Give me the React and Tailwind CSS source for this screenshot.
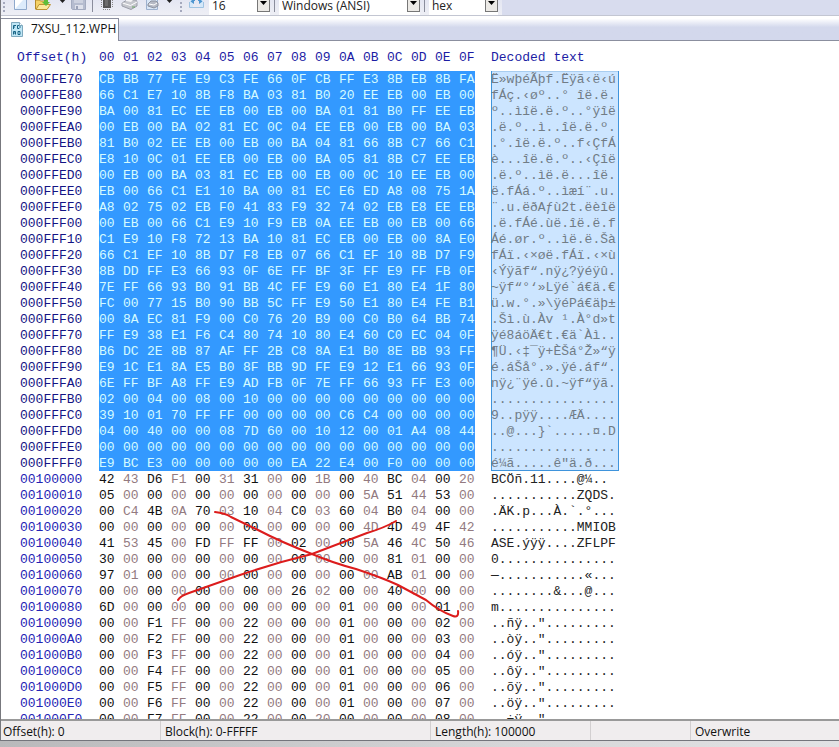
import React from "react";
import clsx from "clsx";

const HEX_COLUMNS = Array.from({ length: 16 }, (_, i) => i.toString(16).toUpperCase().padStart(2, "0"));

const START_OFFSET = 0xffe70;
const SELECTION_END = 0x100000;

const DUMP = [
    "CB BB 77 FE E9 C3 FE 66 0F CB FF E3 8B EB 8B FA",
    "66 C1 E7 10 8B F8 BA 03 81 B0 20 EE EB 00 EB 00",
    "BA 00 81 EC EE EB 00 EB 00 BA 01 81 B0 FF EE EB",
    "00 EB 00 BA 02 81 EC 0C 04 EE EB 00 EB 00 BA 03",
    "81 B0 02 EE EB 00 EB 00 BA 04 81 66 8B C7 66 C1",
    "E8 10 0C 01 EE EB 00 EB 00 BA 05 81 8B C7 EE EB",
    "00 EB 00 BA 03 81 EC EB 00 EB 00 0C 10 EE EB 00",
    "EB 00 66 C1 E1 10 BA 00 81 EC E6 ED A8 08 75 1A",
    "A8 02 75 02 EB F0 41 83 F9 32 74 02 EB E8 EE EB",
    "00 EB 00 66 C1 E9 10 F9 EB 0A EE EB 00 EB 00 66",
    "C1 E9 10 F8 72 13 BA 10 81 EC EB 00 EB 00 8A E0",
    "66 C1 EF 10 8B D7 F8 EB 07 66 C1 EF 10 8B D7 F9",
    "8B DD FF E3 66 93 0F 6E FF BF 3F FF E9 FF FB 0F",
    "7E FF 66 93 B0 91 BB 4C FF E9 60 E1 80 E4 1F 80",
    "FC 00 77 15 B0 90 BB 5C FF E9 50 E1 80 E4 FE B1",
    "00 8A EC 81 F9 00 C0 76 20 B9 00 C0 B0 64 BB 74",
    "FF E9 38 E1 F6 C4 80 74 10 80 E4 60 C0 EC 04 0F",
    "B6 DC 2E 8B 87 AF FF 2B C8 8A E1 B0 8E BB 93 FF",
    "E9 1C E1 8A E5 B0 8F BB 9D FF E9 12 E1 66 93 0F",
    "6E FF BF A8 FF E9 AD FB 0F 7E FF 66 93 FF E3 00",
    "02 00 04 00 08 00 10 00 00 00 00 00 00 00 00 00",
    "39 10 01 70 FF FF 00 00 00 00 C6 C4 00 00 00 00",
    "04 00 40 00 00 08 7D 60 00 10 12 00 01 A4 08 44",
    "00 00 00 00 00 00 00 00 00 00 00 00 00 00 00 00",
    "E9 BC E3 00 00 00 00 00 EA 22 E4 00 F0 00 00 00",
    "42 43 D6 F1 00 31 31 00 00 1B 00 40 BC 04 00 20",
    "05 00 00 00 00 00 00 00 00 00 00 5A 51 44 53 00",
    "00 C4 4B 0A 70 03 10 04 C0 03 60 04 B0 04 00 00",
    "00 00 00 00 00 00 00 00 00 00 00 4D 4D 49 4F 42",
    "41 53 45 00 FD FF FF 00 02 00 00 5A 46 4C 50 46",
    "30 00 00 00 00 00 00 00 00 00 00 00 81 01 00 00",
    "97 01 00 00 00 00 00 00 00 00 00 00 AB 01 00 00",
    "00 00 00 00 00 00 00 00 26 02 00 00 40 00 00 00",
    "6D 00 00 00 00 00 00 00 00 00 01 00 00 00 01 00",
    "00 00 F1 FF 00 00 22 00 00 00 01 00 00 00 02 00",
    "00 00 F2 FF 00 00 22 00 00 00 01 00 00 00 03 00",
    "00 00 F3 FF 00 00 22 00 00 00 01 00 00 00 04 00",
    "00 00 F4 FF 00 00 22 00 00 00 01 00 00 00 05 00",
    "00 00 F5 FF 00 00 22 00 00 00 01 00 00 00 06 00",
    "00 00 F6 FF 00 00 22 00 00 00 01 00 00 00 07 00",
    "00 00 F7 FF 00 00 22 00 00 20 00 00 00 00 08 00",
];

const ansi = new TextDecoder("windows-1252");

// Unprintable bytes show up as dots
const decodeRow = (bytes) =>
    ansi
        .decode(Uint8Array.from(bytes, (b) => parseInt(b, 16)))
        .replace(/[\u0000-\u001f\u007f-\u009f\u00ad]/g, ".");

const rows = DUMP.map((line, index) => {
    const offset = START_OFFSET + index * 16;
    const bytes = line.split(" ");
    return {
        offset: offset.toString(16).toUpperCase().padStart(8, "0"),
        bytes,
        text: decodeRow(bytes),
        selected: offset < SELECTION_END,
        lastSelected: offset + 16 === SELECTION_END,
    };
});

const byteColor = (selected, column) => {
    if (selected) return "bg-[#3399ff] text-[#d4fbff]";
    return column % 2 ? "text-[#937a80]" : "text-[#111]";
};

const Caret = () => (
    <svg width="10" height="6" viewBox="0 0 10 6" className="shrink-0 fill-[#222]" aria-hidden="true">
        <path d="M0 0h9L4.500 5z" />
    </svg>
);

const Grip = () => (
    <svg width="4" height="14" viewBox="0 0 4 14" className="shrink-0 fill-[#a5a9bd]" aria-hidden="true">
        <path d="M1 0h2v2H1zM1 4h2v2H1zM1 8h2v2H1zM1 12h2v2H1z" />
    </svg>
);

const Separator = () => <div className="h-3 w-px shrink-0 bg-[#8a8d9c]" />;

const ToolButton = ({ label, className, children }) => (
    <button type="button" aria-label={label} className={clsx("flex h-3 shrink-0 items-end", className)}>
        {children}
    </button>
);

const ToolSelect = ({ label, value, className }) => (
    <div className={clsx("relative h-5 shrink-0", className)}>
        <select
            aria-label={label}
            defaultValue={value}
            className="h-5 w-full appearance-none bg-white pb-2 pl-[3px] text-xs leading-3 text-[#222] outline-none"
        >
            <option>{value}</option>
        </select>
        <span className="pointer-events-none absolute inset-y-0 right-0 flex w-[13px] items-end justify-center border border-[#777] bg-[#eceae6] pb-[6px]">
            <svg width="7" height="4" viewBox="0 0 7 4" aria-hidden="true">
                <path d="M0 0h7L3.500 4z" />
            </svg>
        </span>
    </div>
);

const Toolbar = () => (
    <div className="flex h-4 shrink-0 items-end overflow-hidden border-b border-[#c3c6d2] bg-[#d8dcee]">
        <div className="flex items-end bg-linear-to-b from-[#dfe2f1] to-[#eeeff5] pb-[3px] pl-px">
            <Grip />
            <ToolButton label="New" className="ml-2 w-[14px]">
                <svg width="14" height="12" viewBox="0 0 14 12">
                    <path d="M.5 -3h12v12.500H.5z" fill="#dcebfb" stroke="#8fa9cc" />
                    <path d="M1 0h8L1 9z" fill="#fff" />
                </svg>
            </ToolButton>
            <ToolButton label="Open" className="ml-[6px] w-[18px]">
                <svg width="18" height="12" viewBox="0 0 18 12">
                    <path d="M1.500 9V0h4l1 1h6v8z" fill="#f5d267" stroke="#b48a2c" />
                    <path d="M2 9.500 5 4.500h11.500L13 9.500z" fill="#fce99c" stroke="#bd9334" />
                    <path d="M10 0h4v2h2l-4 4-4-4h2z" fill="#5fbd3b" />
                </svg>
            </ToolButton>
            <ToolButton label="Open recent" className="ml-[6px] w-[10px] pb-2">
                <Caret />
            </ToolButton>
            <ToolButton label="Save" className="ml-[3px] w-4">
                <svg width="16" height="12" viewBox="0 0 16 12">
                    <path d="M.5 -4h14v13.500h-13l-1-1z" fill="#b5bccf" stroke="#a3abc0" />
                    <path d="M3 -3h9v6H3z" fill="#cdd2e0" />
                    <path d="M4 5h8v4H4z" fill="#dfe2ec" />
                    <path d="M5 6h2v3H5z" fill="#9aa2b8" />
                </svg>
            </ToolButton>
            <div className="ml-[5px]">
                <Separator />
            </div>
            <ToolButton label="Open RAM" className="ml-2 w-[13px]">
                <svg width="13" height="12" viewBox="0 0 13 12">
                    <path d="M2 -2h8v10H2z" fill="#555" />
                    <path d="M0 0h1v1H0zM0 2h1v1H0zM0 4h1v1H0zM0 6h1v1H0zM11 0h1v1h-1zM11 2h1v1h-1zM11 4h1v1h-1zM11 6h1v1h-1zM2 9h1v1H2zM4 9h1v1H4zM6 9h1v1H6zM8 9h1v1H8z" fill="#888" />
                    <path d="M4 0h3v6H4z" fill="#6d6d6d" />
                </svg>
            </ToolButton>
            <ToolButton label="Open disk" className="ml-[7px] w-[17px]">
                <svg width="17" height="12" viewBox="0 0 17 12">
                    <path d="M1 3 6 0h9l1 2v4l-6 3.500L1 6z" fill="#c5c7cd" stroke="#9a9da8" />
                    <path d="m1.500 3 8 2.500L16 2" fill="none" stroke="#fff" />
                    <path d="M5 0h7l-2 2-5-1z" fill="#f4f4f6" />
                    <path d="M11 7h3" stroke="#68a560" />
                </svg>
            </ToolButton>
            <ToolButton label="Open disk image" className="ml-2 w-[14px]">
                <svg width="14" height="12" viewBox="0 0 14 12">
                    <path d="M.5 -2h11v11.500H.5z" fill="#d9e6f6" stroke="#9db1ce" />
                    <path d="m2 4 3-3h5l2 2v3L8 8 2 6z" fill="#b5b9c4" stroke="#8d93a0" />
                    <path d="m3 4 5 1 3-2" fill="none" stroke="#fff" />
                </svg>
            </ToolButton>
            <ToolButton label="Open disk recent" className="ml-[5px] w-[10px] pb-2">
                <Caret />
            </ToolButton>
            <div className="ml-1">
                <Grip />
            </div>
            <ToolButton label="Bytes per row" className="ml-[6px] w-4">
                <svg width="16" height="12" viewBox="0 0 16 12">
                    <path d="M1 0h3v7H1zM11 0h3v7h-3z" fill="#d4e8fa" />
                    <path d="M.5 2v5.500h14V2" fill="none" stroke="#9fc3e2" />
                    <path d="M6 0v1h-1v3L1.500 1.500 4 -1zM9 0v1h1v3l3.500-2.500L11 -1z" fill="#4f96d0" />
                </svg>
            </ToolButton>
            <ToolSelect label="Bytes per row count" value="16" className="ml-1 w-[61px]" />
            <div className="ml-1">
                <Separator />
            </div>
            <ToolSelect label="Character set" value="Windows (ANSI)" className="ml-1 w-[141px]" />
            <div className="ml-1">
                <Separator />
            </div>
            <ToolSelect label="Offset base" value="hex" className="mx-1 w-[69px]" />
        </div>
    </div>
);

const TabStrip = () => (
    <div className="flex h-[25px] shrink-0 items-end bg-linear-to-b from-white from-10% to-[#d3d8ec] to-45%">
        <button
            type="button"
            className="flex h-[23px] w-[118px] items-center gap-2 border-t border-r border-[#8b8f9f] bg-white pb-[2px] pl-[10px] text-xs text-[#111]"
        >
            <svg width="12" height="15" viewBox="0 0 12 15" className="shrink-0" aria-hidden="true">
                <path d="M.5.5h8l3 3v11H.5z" fill="#bfe6f5" stroke="#7fa9be" />
                <path d="M8.500.5v3h3" fill="#fff" stroke="#7fa9be" />
                <path d="M2.500 7V3.500H5M2.500 5H4M6.500 3.500V6.500H8l1-1V4.500L8 3.500zM2.500 12.500v-3h2v3M2.500 11h2M7 9.500h2v3H7z" fill="none" stroke="#176486" />
            </svg>
            7XSU_112.WPH
        </button>
        <div className="h-full flex-1 border-b border-[#8b8f9f]" />
    </div>
);

const HexTable = () => (
    <table className="w-[618px] table-fixed border-collapse whitespace-pre text-left font-['Liberation_Mono','Courier_New',monospace] text-[13px] leading-[14px]">
        <colgroup>
            <col className="w-[98px]" />
            {HEX_COLUMNS.map((column) => (
                <col key={column} className={column === "0F" ? "w-4" : "w-6"} />
            ))}
            <col className="w-4" />
            <col className="w-32" />
        </colgroup>
        <thead>
            <tr className="h-[30px] text-[#1c1ca4]">
                <th scope="col" className="p-0 pt-1 pl-4 font-normal">Offset(h)</th>
                {HEX_COLUMNS.map((column) => (
                    <th key={column} scope="col" className="p-0 pt-1 font-normal">{column}</th>
                ))}
                <td className="p-0" />
                <th scope="col" className="p-0 pt-1 font-normal">Decoded text</th>
            </tr>
        </thead>
        <tbody>
            {rows.map((row, index) => (
                <tr key={row.offset} className="h-4">
                    <th
                        scope="row"
                        className={clsx("p-0 pt-[2px] pl-[19px] font-normal", row.selected ? "text-[#141484]" : "text-[#2424b4]")}
                    >
                        {row.offset}
                    </th>
                    {row.bytes.map((byte, column) => (
                        <td key={column} className={clsx("p-0 pt-[2px]", byteColor(row.selected, column))}>{byte}</td>
                    ))}
                    <td className="p-0" />
                    <td
                        className={clsx(
                            "p-0 pt-[2px]",
                            row.selected ? "bg-[#cce5ff] text-[#717c86]" : "text-[#222]",
                            row.selected && !row.lastSelected && index > 0 && "shadow-[inset_1px_0_#3f94dc,inset_-1px_0_#3f94dc]",
                            index === 0 && "shadow-[inset_1px_0_#3f94dc,inset_-1px_0_#3f94dc,inset_0_1px_#a8cdf0]",
                            row.lastSelected && "shadow-[inset_1px_0_#3f94dc,inset_-1px_0_#3f94dc,inset_0_-1px_#3f94dc]"
                        )}
                    >
                        {row.text}
                    </td>
                </tr>
            ))}
        </tbody>
    </table>
);

// Hand-drawn red cross over the dump
const CrossMark = () => (
    <svg
        width="290"
        height="110"
        viewBox="0 0 290 110"
        fill="none"
        stroke="#dc1c1c"
        strokeWidth="2"
        strokeLinecap="round"
        strokeLinejoin="round"
        className="pointer-events-none absolute left-[174px] top-[469px]"
        aria-hidden="true"
    >
        <path d="M40 2Q50 3 56 7L83 20Q106 32 137 44Q158 53 181 59Q208 68 223 75L251 90Q264 101 278 106Q284 108 283 101" />
        <path d="M221 11Q209 18 192 23L137 44Q100 53 65 65L14 83Q5 86 3 90" />
    </svg>
);

const STATUS = [
    { text: "Offset(h): 0", className: "w-[159px] pl-[2px]" },
    { text: "Block(h): 0-FFFFF", className: "w-[270px] border-l pl-1" },
    { text: "Length(h): 100000", className: "w-[160px] border-l pl-1" },
    { text: "", className: "w-[100px] border-l pl-1" },
    { text: "Overwrite", className: "flex-1 border-l pl-1" },
];

const StatusBar = () => (
    <footer className="flex h-[22px] shrink-0 items-center border-t-2 border-b border-t-[#999] border-b-[#74757c] bg-[#f0edee] text-xs text-[#111]">
        {STATUS.map((panel, index) => (
            <div key={index} className={clsx("flex h-full shrink-0 items-center border-[#d2cfd0] pt-[2px]", panel.className)}>
                {panel.text}
            </div>
        ))}
    </footer>
);

const App = () => (
    <div className="flex h-screen flex-col overflow-hidden bg-[#cfcfd1] font-['Open_Sans','Noto_Sans',sans-serif]">
        <div className="flex min-h-0 flex-1 flex-col border-l border-[#77787d] bg-white">
            <Toolbar />
            <TabStrip />
            <main className="relative min-h-0 flex-1 overflow-hidden">
                <HexTable />
                <CrossMark />
            </main>
            <StatusBar />
        </div>
        <div className="h-[6px] shrink-0 bg-linear-to-r from-[#b9b9bb] via-[#d6d6d8] via-60% to-[#e2e2e4]" />
    </div>
);

export default App;
